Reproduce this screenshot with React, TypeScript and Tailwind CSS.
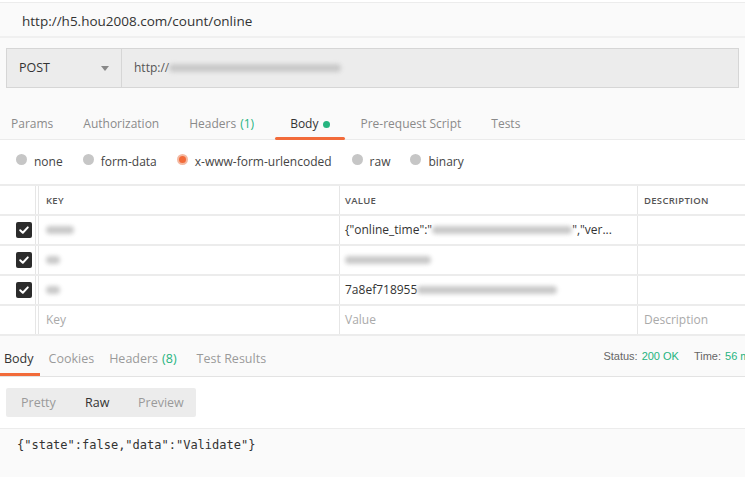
import React from "react";

const tabs = [
  { label: "Params", mr: "mr-[30px]" },
  { label: "Authorization", mr: "mr-[30px]" },
  { label: "Headers", count: "(1)", mr: "mr-[36px]" },
  { label: "Body", active: true, dot: true, mr: "mr-[30px]" },
  { label: "Pre-request Script", mr: "mr-[30px]" },
  { label: "Tests", mr: "mr-[30px]" },
];

const radios = [
  { label: "none" },
  { label: "form-data" },
  { label: "x-www-form-urlencoded", active: true },
  { label: "raw" },
  { label: "binary" },
];

function Blur({ w }: { w: number }) {
  // blurred-out values in the screenshot
  return <span className="inline-block h-[8px] rounded-full bg-[#c9c9c9] blur-[2px] align-middle" style={{ width: w }} />;
}

function Check() {
  return (
    <div className="w-[16px] h-[16px] rounded-[2px] bg-[#2b2b2b] flex items-center justify-center">
      <svg width="12" height="12" viewBox="0 0 12 12">
        <path d="M2.2 6.3 L4.8 8.8 L9.8 3.4" fill="none" stroke="white" strokeWidth="2" strokeLinecap="round" strokeLinejoin="round" />
      </svg>
    </div>
  );
}

function Row({ check, keyCell, valueCell, desc }: { check?: boolean; keyCell: React.ReactNode; valueCell: React.ReactNode; desc?: React.ReactNode }) {
  return (
    <div className="flex h-[30px] border-b-2 border-[#ececec]">
      <div className="w-[36px] flex items-center justify-end pr-[3px] border-r border-[#e6e6e6]">{check && <Check />}</div>
      <div className="w-[302px] ml-[2px] pl-[7px] flex items-center border-l border-r border-[#e6e6e6]">{keyCell}</div>
      <div className="w-[298px] pl-[5px] flex items-center border-r border-[#e6e6e6] text-[#333]">{valueCell}</div>
      <div className="flex-1 pl-[6px] flex items-center">{desc}</div>
    </div>
  );
}

export default function App() {
  return (
    <div className="w-[745px] h-[477px] overflow-hidden bg-[#fafafa] text-[12px] text-[#333]" style={{ fontFamily: '"Open Sans", sans-serif' }}>
      <div className="h-[3px] border-b border-[#ececec] bg-white" />
      <div className="h-[35px] pl-[22px] pt-[3px] flex items-center text-[13.5px] text-[#333] border-b-2 border-[#f0f0f0]">
        http://h5.hou2008.com/count/online
      </div>
      <div className="pt-[10px] pb-[16px] px-[6px]">
        <div className="w-[733px] h-[40px] flex bg-[#ececec] border border-[#d6d6d6]">
          <div className="w-[115px] flex items-center justify-between pl-[12px] pr-[12px] border-r border-[#d6d6d6] text-[12.5px]">
            <span>POST</span>
            <svg width="8" height="5" viewBox="0 0 8 5"><path d="M0 0 H8 L4 5Z" fill="#888" /></svg>
          </div>
          <div className="flex items-center pl-[12px] text-[12px] text-[#555]">
            http://<Blur w={172} />
          </div>
        </div>
      </div>

      <div className="h-[36px] flex items-stretch border-b border-[#ebebeb] pl-[11px] pt-[5px]">
        {tabs.map((t) => (
          <div key={t.label} className={`relative flex items-center ${t.mr} text-[12px] ${t.active ? "text-[#333]" : "text-[#8a8a8a]"}`}>
            {t.label}
            {t.count && <span className="ml-[4px] text-[#26b47f]">{t.count}</span>}
            {t.dot && <span className="ml-[5px] w-[7px] h-[7px] rounded-full bg-[#26b47f]" />}
            {t.active && <div className="absolute bottom-[-1px] left-[-15px] right-[-15px] h-[3px] bg-[#f26b3a] rounded-full" />}
          </div>
        ))}
      </div>

      <div className="bg-white">
        <div className="h-[44px] flex items-center pl-[16px]">
          {radios.map((r) => (
            <div key={r.label} className="flex items-center mr-[20px]">
              <span className={`w-[11px] h-[11px] rounded-full mr-[7px] -mt-[6px] ${r.active ? "bg-[#f26b3a] border-[2px] border-[#f4b9a2]" : "bg-[#c6c6c6]"}`} />
              <span className="text-[12px] text-[#444]">{r.label}</span>
            </div>
          ))}
        </div>

        <div className="border-t-2 border-[#ececec]">
          <div className="flex h-[30px] border-b-2 border-[#ececec] text-[9.5px] font-semibold text-[#555] tracking-[0.3px]">
            <div className="w-[36px] border-r border-[#e6e6e6]" />
            <div className="w-[302px] ml-[2px] pl-[7px] pt-[2px] flex items-center border-l border-r border-[#e6e6e6]">KEY</div>
            <div className="w-[298px] pl-[5px] pt-[2px] flex items-center border-r border-[#e6e6e6]">VALUE</div>
            <div className="flex-1 pl-[6px] pt-[2px] flex items-center">DESCRIPTION</div>
          </div>
          <Row
            check
            keyCell={<Blur w={28} />}
            valueCell={
              <span className="flex items-center whitespace-nowrap">
                {'{"online_time":"'}
                <Blur w={140} />
                {'","ver...'}
              </span>
            }
          />
          <Row check keyCell={<Blur w={14} />} valueCell={<Blur w={86} />} />
          <Row
            check
            keyCell={<Blur w={14} />}
            valueCell={
              <span className="flex items-center whitespace-nowrap">
                7a8ef718955
                <Blur w={140} />
              </span>
            }
          />
          <Row keyCell={<span className="text-[#aaa]">Key</span>} valueCell={<span className="text-[#aaa]">Value</span>} desc={<span className="text-[#aaa]">Description</span>} />
        </div>
      </div>

      <div className="h-[41px] flex items-stretch justify-between border-b border-[#e3e3e3]">
        <div className="flex items-stretch pl-[4px] pt-[6px]">
          {[
            { label: "Body", active: true, mr: "mr-[15px]" },
            { label: "Cookies", mr: "mr-[15px]" },
            { label: "Headers", count: "(8)", mr: "mr-[20px]" },
            { label: "Test Results", mr: "mr-[15px]" },
          ].map((t) => (
            <div key={t.label} className={`relative flex items-center ${t.mr} text-[12.5px] ${t.active ? "text-[#333]" : "text-[#9a9a9a]"}`}>
              {t.label}
              {t.count && <span className="ml-[4px] text-[#26b47f]">{t.count}</span>}
              {t.active && <div className="absolute bottom-0 left-[-4px] right-[-6px] h-[3px] bg-[#f26b3a]" />}
            </div>
          ))}
        </div>
        <div className="flex items-center pt-[1px] whitespace-nowrap text-[11px] text-[#666] -mr-[10px]" style={{ fontFamily: '"Liberation Sans", Arial, sans-serif' }}>
          <span>Status:</span>
          <span className="ml-[4px] text-[#26b47f]">200 OK</span>
          <span className="ml-[15px]">Time:</span>
          <span className="ml-[4px] text-[#26b47f]">56 ms</span>
        </div>
      </div>

      <div className="bg-white pt-[11px] pb-[11px] px-[6px] border-b border-[#ececec]">
        <div className="w-[190px] h-[29px] pt-[2px] flex items-center bg-[#ececec] rounded-[2px] text-[12.5px]">
          <span className="pl-[15px] w-[79px] text-[#9a9a9a]">Pretty</span>
          <span className="w-[53px] text-[#333]">Raw</span>
          <span className="text-[#9a9a9a]">Preview</span>
        </div>
      </div>

      <div className="ml-[6px] pt-[7px] pl-[11px] text-[12px] text-[#333]" style={{ fontFamily: '"DejaVu Sans Mono", "Liberation Mono", monospace' }}>
        {'{"state":false,"data":"Validate"}'}
      </div>
    </div>
  );
}
